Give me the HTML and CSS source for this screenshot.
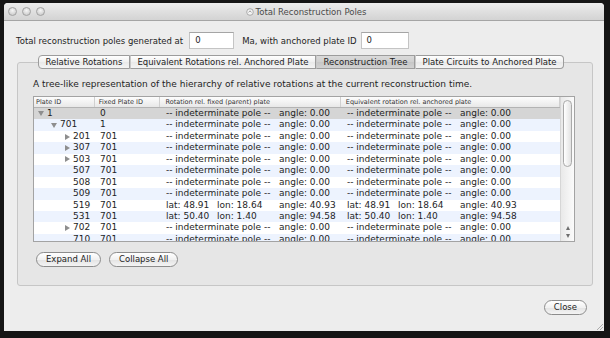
FILE: index.html
```html
<!DOCTYPE html>
<html>

<head>
    <link rel="stylesheet" href="styles.css">
</head>

<body>
    <div class="window">
        <!-- Title bar -->
        <div class="titlebar">
            <div class="lights">
                <span class="light"></span>
                <span class="light"></span>
                <span class="light"></span>
            </div>
            <div class="title">
                <svg width="8" height="8" viewBox="0 0 8 8">
                    <circle cx="4" cy="4" r="3.3" fill="#f4f4f4" stroke="#9a9a9a" stroke-width="0.8"/>
                    <path d="M2.6 4.4 L4 2.8 L5.4 4.4" fill="none" stroke="#8a8a8a" stroke-width="0.8"/>
                </svg>
                <span>Total Reconstruction Poles</span>
            </div>
        </div>

        <div class="content">
            <!-- Time / anchor row -->
            <div class="top-row">
                <span>Total reconstruction poles generated at</span>
                <div class="field field-time">0</div>
                <span>Ma, with anchored plate ID</span>
                <div class="field field-anchor">0</div>
            </div>

            <!-- Tabs -->
            <div class="tabs">
                <div class="tab">Relative Rotations</div>
                <div class="tab">Equivalent Rotations rel. Anchored Plate</div>
                <div class="tab selected">Reconstruction Tree</div>
                <div class="tab">Plate Circuits to Anchored Plate</div>
            </div>

            <div class="panel">
                <p class="desc">A tree-like representation of the hierarchy of relative rotations at the current reconstruction time.</p>

                <div class="table">
                    <div class="table-main">
                        <div class="thead">
                            <div class="th c1">Plate ID</div>
                            <div class="th c2">Fixed Plate ID</div>
                            <div class="th c3">Rotation rel. fixed (parent) plate</div>
                            <div class="th c4">Equivalent rotation rel. anchored plate</div>
                        </div>
                        <div class="tbody">
                            <div class="row selected">
                                <div class="cell c1 lvl0"><span class="arrow open"></span>1</div>
                                <div class="cell c2">0</div>
                                <div class="cell c3"><span class="pole">-- indeterminate pole --</span>angle: 0.00</div>
                                <div class="cell c4"><span class="pole">-- indeterminate pole --</span>angle: 0.00</div>
                            </div>
                            <div class="row">
                                <div class="cell c1 lvl1"><span class="arrow open"></span>701</div>
                                <div class="cell c2">1</div>
                                <div class="cell c3"><span class="pole">-- indeterminate pole --</span>angle: 0.00</div>
                                <div class="cell c4"><span class="pole">-- indeterminate pole --</span>angle: 0.00</div>
                            </div>
                            <div class="row">
                                <div class="cell c1 lvl2"><span class="arrow closed"></span>201</div>
                                <div class="cell c2">701</div>
                                <div class="cell c3"><span class="pole">-- indeterminate pole --</span>angle: 0.00</div>
                                <div class="cell c4"><span class="pole">-- indeterminate pole --</span>angle: 0.00</div>
                            </div>
                            <div class="row">
                                <div class="cell c1 lvl2"><span class="arrow closed"></span>307</div>
                                <div class="cell c2">701</div>
                                <div class="cell c3"><span class="pole">-- indeterminate pole --</span>angle: 0.00</div>
                                <div class="cell c4"><span class="pole">-- indeterminate pole --</span>angle: 0.00</div>
                            </div>
                            <div class="row">
                                <div class="cell c1 lvl2"><span class="arrow closed"></span>503</div>
                                <div class="cell c2">701</div>
                                <div class="cell c3"><span class="pole">-- indeterminate pole --</span>angle: 0.00</div>
                                <div class="cell c4"><span class="pole">-- indeterminate pole --</span>angle: 0.00</div>
                            </div>
                            <div class="row">
                                <div class="cell c1 lvl2"><span class="arrow"></span>507</div>
                                <div class="cell c2">701</div>
                                <div class="cell c3"><span class="pole">-- indeterminate pole --</span>angle: 0.00</div>
                                <div class="cell c4"><span class="pole">-- indeterminate pole --</span>angle: 0.00</div>
                            </div>
                            <div class="row">
                                <div class="cell c1 lvl2"><span class="arrow"></span>508</div>
                                <div class="cell c2">701</div>
                                <div class="cell c3"><span class="pole">-- indeterminate pole --</span>angle: 0.00</div>
                                <div class="cell c4"><span class="pole">-- indeterminate pole --</span>angle: 0.00</div>
                            </div>
                            <div class="row">
                                <div class="cell c1 lvl2"><span class="arrow"></span>509</div>
                                <div class="cell c2">701</div>
                                <div class="cell c3"><span class="pole">-- indeterminate pole --</span>angle: 0.00</div>
                                <div class="cell c4"><span class="pole">-- indeterminate pole --</span>angle: 0.00</div>
                            </div>
                            <div class="row">
                                <div class="cell c1 lvl2"><span class="arrow"></span>519</div>
                                <div class="cell c2">701</div>
                                <div class="cell c3"><span class="lat">lat: 48.91</span><span class="lon">lon: 18.64</span>angle: 40.93</div>
                                <div class="cell c4"><span class="lat">lat: 48.91</span><span class="lon">lon: 18.64</span>angle: 40.93</div>
                            </div>
                            <div class="row">
                                <div class="cell c1 lvl2"><span class="arrow"></span>531</div>
                                <div class="cell c2">701</div>
                                <div class="cell c3"><span class="lat">lat: 50.40</span><span class="lon">lon: 1.40</span>angle: 94.58</div>
                                <div class="cell c4"><span class="lat">lat: 50.40</span><span class="lon">lon: 1.40</span>angle: 94.58</div>
                            </div>
                            <div class="row">
                                <div class="cell c1 lvl2"><span class="arrow closed"></span>702</div>
                                <div class="cell c2">701</div>
                                <div class="cell c3"><span class="pole">-- indeterminate pole --</span>angle: 0.00</div>
                                <div class="cell c4"><span class="pole">-- indeterminate pole --</span>angle: 0.00</div>
                            </div>
                            <div class="row">
                                <div class="cell c1 lvl2"><span class="arrow"></span>710</div>
                                <div class="cell c2">701</div>
                                <div class="cell c3"><span class="pole">-- indeterminate pole --</span>angle: 0.00</div>
                                <div class="cell c4"><span class="pole">-- indeterminate pole --</span>angle: 0.00</div>
                            </div>
                        </div>
                    </div>
                    <div class="scrollbar">
                        <div class="thumb"></div>
                        <div class="scroll-arrows">
                            <span class="sa up"></span>
                            <span class="sa down"></span>
                        </div>
                    </div>
                </div>

                <div class="buttons">
                    <div class="btn">Expand All</div>
                    <div class="btn">Collapse All</div>
                </div>
            </div>

            <div class="footer">
                <div class="btn">Close</div>
            </div>
        </div>

        <svg class="grip" width="7" height="7" viewBox="0 0 7 7">
            <path d="M1 7 L7 1 M4 7 L7 4" stroke="#9a9a9a" stroke-width="0.8"/>
        </svg>
    </div>
</body>

</html>
```

FILE: styles.css
```css
body {
    margin: 0;
    width: 610px;
    height: 338px;
    overflow: hidden;
    background: #151515;
    font-family: "DejaVu Sans", sans-serif;
    font-size: 8.5px;
    color: #1e1e1e;
}

.window {
    position: relative;
    margin: 3px 6px 0 4px;
    width: 600px;
    height: 328px;
    background: #ededed;
    border-radius: 4px 4px 0 0;
    display: flex;
    flex-direction: column;
}

/* Title bar */
.titlebar {
    position: relative;
    height: 17px;
    background: linear-gradient(#ececec, #d3d3d3);
    border-bottom: 1px solid #a5a5a5;
    border-radius: 4px 4px 0 0;
    display: flex;
    align-items: center;
    justify-content: center;
}

.lights {
    position: absolute;
    left: 4px;
    top: 4px;
    display: flex;
    gap: 5px;
}

.light {
    width: 9px;
    height: 9px;
    box-sizing: border-box;
    border-radius: 50%;
    border: 1px solid #a2a2a2;
    background: radial-gradient(circle at 50% 35%, #f6f6f6, #c2c2c2);
}

.title {
    display: flex;
    align-items: center;
    gap: 2px;
    font-size: 8.5px;
    color: #4a4a4a;
    padding-left: 4px;
}

.content {
    flex: 1;
    padding: 0 11px 0 13px;
    display: flex;
    flex-direction: column;
}

/* Top row */
.top-row {
    display: flex;
    align-items: center;
    height: 17px;
    margin-top: 11px;
    margin-left: -1px;
}

.field {
    height: 17px;
    box-sizing: border-box;
    background: #fff;
    border: 1px solid #c4c4c4;
    border-top-color: #a5a5a5;
    padding-left: 5px;
    line-height: 15px;
}

.field-time {
    width: 45px;
    margin: 0 8px 0 6px;
}

.field-anchor {
    width: 48px;
    margin-left: 4px;
}

/* Tabs */
.tabs {
    position: relative;
    z-index: 1;
    display: flex;
    justify-content: center;
    margin-top: 6px;
    margin-bottom: -7px;
    padding-right: 8px;
}

.tab {
    height: 14px;
    box-sizing: border-box;
    padding: 0 6.5px;
    line-height: 12px;
    border: 1px solid #9c9c9c;
    border-left: 1px solid #c9c9c9;
    background: linear-gradient(#ffffff, #f0f0f0 50%, #e9e9e9 51%, #f4f4f4);
    color: #1e1e1e;
}

.tab:first-child {
    border-left-color: #9c9c9c;
    border-radius: 4px 0 0 4px;
}

.tab:last-child {
    border-radius: 0 4px 4px 0;
}

.tab.selected {
    background: linear-gradient(#dadada, #cfcfcf 50%, #c6c6c6 51%, #d2d2d2);
}

/* Panel */
.panel {
    background: #e6e6e6;
    border: 1px solid #c6c6c6;
    border-radius: 3px;
    padding: 16px 17px 18px 15px;
}

.desc {
    margin: 0;
    font-size: 9px;
    line-height: 11px;
}

.table {
    display: flex;
    height: 144px;
    margin-top: 6px;
    border: 1px solid #a3a3a3;
    background: #fff;
    overflow: hidden;
}

.table-main {
    flex: 1;
    overflow: hidden;
}

.thead {
    display: flex;
    height: 10px;
    background: linear-gradient(#fdfdfd, #e8e8e8);
    border-bottom: 1px solid #b3b3b3;
    font-size: 6.5px;
    color: #333;
}

.th {
    box-sizing: border-box;
    line-height: 10px;
    border-right: 1px solid #d0d0d0;
    padding-left: 2px;
}

.c1 { width: 61px; }
.c2 { width: 65px; }
.c3 { width: 182px; }
.c4 { width: 220px; }

.th.c2 { padding-left: 4px; }
.th.c3 { padding-left: 6px; }
.th.c4 { padding-left: 5px; }

.row {
    display: flex;
    height: 11.45px;
    line-height: 11.45px;
    font-size: 9px;
    white-space: nowrap;
}

.row:nth-child(even) {
    background: #edf3fe;
}

.row.selected {
    background: #d5d5d5;
}

.cell {
    box-sizing: border-box;
    flex-shrink: 0;
    display: flex;
    align-items: center;
}

.cell.c2 { padding-left: 5px; }
.cell.c3 { padding-left: 6px; }
.cell.c4 { padding-left: 5px; }

.lvl0 { padding-left: 4px; }
.lvl1 { padding-left: 17px; }
.lvl2 { padding-left: 30px; }

.pole {
    width: 113px;
}

.lat {
    width: 51px;
}

.lon {
    width: 62px;
}

.arrow {
    width: 9px;
    height: 6px;
    display: flex;
    align-items: center;
}

.arrow.open::before {
    content: "";
    border-left: 3px solid transparent;
    border-right: 3px solid transparent;
    border-top: 5px solid #8e8e8e;
}

.arrow.closed::before {
    content: "";
    margin-left: 1px;
    border-top: 3px solid transparent;
    border-bottom: 3px solid transparent;
    border-left: 5px solid #8e8e8e;
}

/* Scrollbar */
.scrollbar {
    width: 14px;
    box-sizing: border-box;
    border-left: 1px solid #d6d6d6;
    background: linear-gradient(to right, #e9e9e9, #fbfbfb);
    display: flex;
    flex-direction: column;
    align-items: center;
}

.thumb {
    width: 9px;
    height: 67px;
    margin-top: 3px;
    box-sizing: border-box;
    border: 1px solid #a9a9a9;
    border-radius: 5px;
    background: linear-gradient(to right, #ffffff, #e2e2e2);
}

.scroll-arrows {
    margin-top: auto;
    margin-bottom: 3px;
    display: flex;
    flex-direction: column;
    align-items: center;
    gap: 4px;
}

.sa {
    width: 0;
    height: 0;
    border-left: 2.5px solid transparent;
    border-right: 2.5px solid transparent;
}

.sa.up {
    border-bottom: 4px solid #6e6e6e;
}

.sa.down {
    border-top: 4px solid #6e6e6e;
}

/* Buttons */
.buttons {
    display: flex;
    gap: 8px;
    margin-top: 10px;
    padding-left: 3px;
}

.btn {
    height: 15px;
    box-sizing: border-box;
    padding: 0 9px;
    line-height: 13px;
    font-size: 8.5px;
    border: 1px solid #8c8c8c;
    border-radius: 8px;
    background: linear-gradient(#ffffff, #f1f1f1 50%, #e3e3e3 51%, #f4f4f4);
    color: #1e1e1e;
}

.footer {
    display: flex;
    justify-content: flex-end;
    margin-top: 14px;
    padding-right: 6px;
}

.grip {
    position: absolute;
    right: 1px;
    bottom: 1px;
}
```
